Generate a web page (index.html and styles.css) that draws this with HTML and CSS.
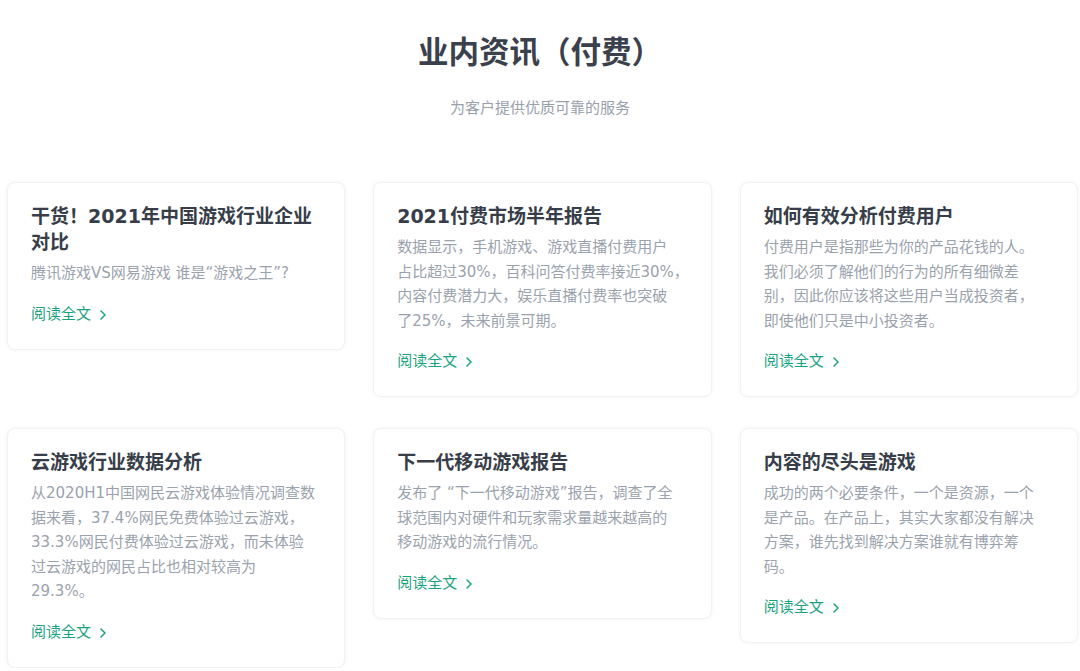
FILE: index.html
```html
<!DOCTYPE html>
<html lang="zh-CN">
<head>
<meta charset="utf-8">
<title>业内资讯（付费）</title>
<link rel="stylesheet" href="styles.css">
</head>
<body>
<header class="intro">
  <h1 class="intro-title">业内资讯（付费）</h1>
  <p class="intro-sub">为客户提供优质可靠的服务</p>
</header>
<main class="grid">
  <article class="card">
    <h2 class="card-title">干货！2021年中国游戏行业企业<br>对比</h2>
    <p class="card-desc">腾讯游戏VS网易游戏 谁是“游戏之王”?</p>
    <a class="card-link" href="#">阅读全文<svg class="chev" viewBox="0 0 6 10" width="6" height="10"><path d="M1 1l4 4-4 4" fill="none" stroke="currentColor" stroke-width="1.5" stroke-linecap="round" stroke-linejoin="round"/></svg></a>
  </article>
  <article class="card">
    <h2 class="card-title">2021付费市场半年报告</h2>
    <p class="card-desc">数据显示，手机游戏、游戏直播付费用户<br>占比超过30%，百科问答付费率接近30%，<br>内容付费潜力大，娱乐直播付费率也突破<br>了25%，未来前景可期。</p>
    <a class="card-link" href="#">阅读全文<svg class="chev" viewBox="0 0 6 10" width="6" height="10"><path d="M1 1l4 4-4 4" fill="none" stroke="currentColor" stroke-width="1.5" stroke-linecap="round" stroke-linejoin="round"/></svg></a>
  </article>
  <article class="card">
    <h2 class="card-title">如何有效分析付费用户</h2>
    <p class="card-desc">付费用户是指那些为你的产品花钱的人。<br>我们必须了解他们的行为的所有细微差<br>别，因此你应该将这些用户当成投资者，<br>即使他们只是中小投资者。</p>
    <a class="card-link" href="#">阅读全文<svg class="chev" viewBox="0 0 6 10" width="6" height="10"><path d="M1 1l4 4-4 4" fill="none" stroke="currentColor" stroke-width="1.5" stroke-linecap="round" stroke-linejoin="round"/></svg></a>
  </article>
  <article class="card">
    <h2 class="card-title">云游戏行业数据分析</h2>
    <p class="card-desc">从2020H1中国网民云游戏体验情况调查数<br>据来看，37.4%网民免费体验过云游戏，<br>33.3%网民付费体验过云游戏，而未体验<br>过云游戏的网民占比也相对较高为<br>29.3%。</p>
    <a class="card-link" href="#">阅读全文<svg class="chev" viewBox="0 0 6 10" width="6" height="10"><path d="M1 1l4 4-4 4" fill="none" stroke="currentColor" stroke-width="1.5" stroke-linecap="round" stroke-linejoin="round"/></svg></a>
  </article>
  <article class="card">
    <h2 class="card-title">下一代移动游戏报告</h2>
    <p class="card-desc">发布了 “下一代移动游戏”报告，调查了全<br>球范围内对硬件和玩家需求量越来越高的<br>移动游戏的流行情况。</p>
    <a class="card-link" href="#">阅读全文<svg class="chev" viewBox="0 0 6 10" width="6" height="10"><path d="M1 1l4 4-4 4" fill="none" stroke="currentColor" stroke-width="1.5" stroke-linecap="round" stroke-linejoin="round"/></svg></a>
  </article>
  <article class="card">
    <h2 class="card-title">内容的尽头是游戏</h2>
    <p class="card-desc">成功的两个必要条件，一个是资源，一个<br>是产品。在产品上，其实大家都没有解决<br>方案，谁先找到解决方案谁就有博弈筹<br>码。</p>
    <a class="card-link" href="#">阅读全文<svg class="chev" viewBox="0 0 6 10" width="6" height="10"><path d="M1 1l4 4-4 4" fill="none" stroke="currentColor" stroke-width="1.5" stroke-linecap="round" stroke-linejoin="round"/></svg></a>
  </article>
</main>
</body>
</html>
```

FILE: styles.css
```css
* { box-sizing: border-box; }

html, body {
  margin: 0;
  background: #ffffff;
}

body {
  font-family: "DejaVu Sans", "Noto Sans CJK SC", sans-serif;
  color: #3a414c;
}

.intro {
  text-align: center;
  padding-top: 33px;
}

.intro-title {
  margin: 0;
  font-size: 30.5px;
  line-height: 40px;
  font-weight: 700;
  color: #3a414c;
}

.intro-sub {
  margin: 25px 0 0;
  font-size: 15px;
  line-height: 20px;
  color: #98a0ab;
}

.grid {
  display: grid;
  grid-template-columns: repeat(3, 1fr);
  column-gap: 28px;
  row-gap: 31px;
  padding: 0 2px 0 7px;
  margin-top: 64px;
  align-items: start;
}

.card {
  background: #fff;
  border: 1px solid #f1f2f4;
  border-radius: 8px;
  box-shadow: 0 0 4px rgba(0, 0, 0, 0.05);
  padding: 20px 22px 23px 23px;
}

.card-title {
  margin: 0;
  font-size: 19px;
  line-height: 26px;
  font-weight: 700;
  color: #373e49;
}

.card-desc {
  margin: 6px 0 0;
  font-size: 15px;
  line-height: 24.5px;
  color: #9aa2ad;
  white-space: nowrap;
}

.card-link {
  display: flex;
  align-items: center;
  margin-top: 16px;
  font-size: 15px;
  line-height: 24px;
  color: #1aa27f;
  text-decoration: none;
}

.chev {
  margin-left: 9px;
  margin-top: 2px;
}
```
